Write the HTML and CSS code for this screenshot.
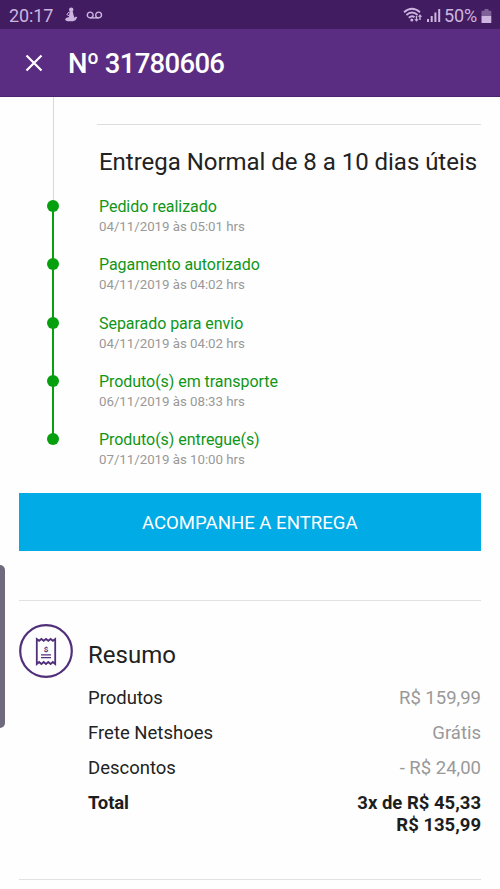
FILE: index.html
```html
<!DOCTYPE html>
<html lang="pt-BR">
<head>
<meta charset="utf-8">
<title>Nº 31780606</title>
<link rel="stylesheet" href="styles.css">
</head>
<body>
<div class="status">
  <span class="clock">20:17</span>
  <svg class="notif" width="14" height="15" viewBox="0 0 14 15"><circle cx="7.2" cy="2.8" r="2.2"/><path d="M5.500 4.500h3.200l1 4 .7 2.200 1.600-1.200 1.200.8-1.700 3L9 14.300H3.500L1 13l1-2 3-1z"/><path d="M5 5 2.800 7.500 5 8.800M4.500 12h5" class="notif-cut"/></svg>
  <svg class="voice" width="17" height="9" viewBox="0 0 17 9"><circle cx="4.200" cy="4" r="2.900"/><circle cx="12.600" cy="4" r="2.900"/><path d="M4.200 6.900h8.400"/></svg>
  <div class="system">
    <svg width="39" height="17" viewBox="0 0 39 17"><g class="wifi"><path d="M1 5.200Q9 -1.800 17 5.200M3.400 8Q9 3 14.600 8M5.800 10.700Q9 8 11.500 10.200"/></g><circle cx="8.800" cy="13" r="1.500"/><path d="m13.500 14.800-2.200-2.500h1.500V9h1.400v3.300h1.500zM17 7.300l2.200 2.500h-1.500V13h-1.400V9.800h-1.500z"/><path d="M24 12h2v3h-2zM27.700 9h2v6h-2zM31.400 5.500h2V15h-2zM35.200 2h2v13h-2z"/></svg>
    <span class="percent">50%</span>
    <svg width="11" height="16" viewBox="0 0 11 16"><path class="battery-empty" d="M3.500 1h4v1.800h2.800V8H.5V2.800h3z"/><path d="M.5 8h9.800v7H.5z"/></svg>
  </div>
</div>
<header class="appbar">
  <svg width="18" height="18" viewBox="0 0 18 18"><path d="m1.500 1.500 15 15m0-15-15 15"/></svg>
  <h1>Nº 31780606</h1>
</header>
<main>
  <section class="delivery">
    <h2>Entrega Normal de 8 a 10 dias úteis</h2>
    <ol class="steps">
      <li><strong>Pedido realizado</strong><time>04/11/2019 às 05:01 hrs</time></li>
      <li><strong>Pagamento autorizado</strong><time>04/11/2019 às 04:02 hrs</time></li>
      <li><strong>Separado para envio</strong><time>04/11/2019 às 04:02 hrs</time></li>
      <li><strong>Produto(s) em transporte</strong><time>06/11/2019 às 08:33 hrs</time></li>
      <li><strong>Produto(s) entregue(s)</strong><time>07/11/2019 às 10:00 hrs</time></li>
    </ol>
  </section>
  <button class="track">ACOMPANHE A ENTREGA</button>
  <section class="summary">
    <svg class="receipt" width="54" height="54" viewBox="0 0 54 54"><circle cx="27" cy="27" r="25.800"/><path d="M17.800 40V15l2.300 1.800 2.300-1.800 2.300 1.800L27 15l2.300 1.800 2.300-1.800 2.300 1.800L36.200 15v25l-2.300-2-2.300 2-2.300-2-2.300 2-2.300-2-2.300 2-2.300-2z"/><path class="fine" d="M22 30.800h10M22 33.600h10"/><text x="27" y="27.800">$</text></svg>
    <div class="details">
      <h2>Resumo</h2>
      <dl>
        <div><dt>Produtos</dt><dd>R$ 159,99</dd></div>
        <div><dt>Frete Netshoes</dt><dd>Grátis</dd></div>
        <div><dt>Descontos</dt><dd>- R$ 24,00</dd></div>
        <div class="total"><dt>Total</dt><dd>3x de R$ 45,33<br>R$ 135,99</dd></div>
      </dl>
    </div>
  </section>
</main>
<div class="edge-handle"></div>
</body>
</html>
```

FILE: styles.css
```css
* { box-sizing: border-box; }
body {
  margin: 0;
  height: 889px;
  overflow: hidden;
  background: #fefefe;
  color: #222;
  font-family: Roboto, sans-serif;
}
h1, h2, ol, dl, dd { margin: 0; padding: 0; font-weight: 400; }
svg { display: block; flex: none; }

.status {
  display: flex;
  align-items: center;
  height: 29px;
  padding: 2px 8px 0 9px;
  background: #411c61;
  color: #cdb5df;
  fill: #cdb5df;
  font-size: 18px;
}
.clock { width: 55px; letter-spacing: -0.1px; }
.notif { margin-top: -2px; }
.notif-cut { fill: none; stroke: #cdb5df; stroke-width: 1; }
.voice { margin-left: 8px; fill: none; stroke: #cdb5df; stroke-width: 1.4; }
.system { display: flex; align-items: center; margin-left: auto; }
.wifi { fill: none; stroke: #cdb5df; stroke-width: 1.8; }
.percent { margin: 0 4px 0 2px; letter-spacing: -0.1px; }
.battery-empty { opacity: 0.45; }

.appbar {
  display: flex;
  align-items: center;
  gap: 25px;
  height: 68px;
  padding-left: 25px;
  background: #5b2d82;
  border-bottom: 1px solid #4c2470;
  color: #fff;
}
.appbar svg { margin-top: 1px; }
.appbar path { stroke: #fff; stroke-width: 2.2; }
.appbar h1 { padding-top: 2px; font-size: 27.5px; font-weight: 500; letter-spacing: -0.7px; line-height: 32px; }

.delivery { position: relative; padding: 27px 19px 0 97px; }
.delivery::before {
  content: "";
  position: absolute;
  left: 53px;
  top: 0;
  width: 1px;
  height: 110px;
  background: #d8d8d8;
}
.delivery h2 {
  height: 72px;
  padding: 22px 0 0 2px;
  border-top: 1px solid #ddd;
  font-size: 24px;
  letter-spacing: -0.03px;
  line-height: 30px;
  white-space: nowrap;
}
.steps { list-style: none; padding-left: 2px; }
.steps li { position: relative; height: 58.3px; }
.steps li::before {
  content: "";
  position: absolute;
  left: -52px;
  top: 4px;
  width: 12px;
  height: 12px;
  border-radius: 50%;
  background: #06a00e;
}
.steps li:not(:last-child)::after {
  content: "";
  position: absolute;
  left: -47px;
  top: 10px;
  width: 2px;
  height: 58.3px;
  background: #06a00e;
}
.steps strong { display: block; color: #109618; font-size: 16px; font-weight: 400; letter-spacing: -0.05px; line-height: 22px; }
.steps time { display: block; color: #999; font-size: 13.3px; letter-spacing: -0.03px; line-height: 18px; }

.track {
  display: block;
  width: 461.5px;
  height: 58px;
  margin: 5.5px 0 0 19px;
  padding: 2px 0 0;
  border: 0;
  background: #00abe6;
  color: #fff;
  font: 18.6px Roboto, sans-serif;
}

.summary {
  display: flex;
  gap: 15px;
  height: 280px;
  margin: 49px 19px 0;
  padding-top: 23px;
  border-top: 1px solid #e1e1e1;
  border-bottom: 1px solid #e1e1e1;
}
.receipt { fill: none; stroke: #51307a; stroke-width: 2.2; }
.receipt path { stroke-width: 1.8; }
.receipt .fine { stroke-width: 1.3; }
.receipt text { fill: #51307a; stroke: none; font-size: 8px; font-weight: 700; text-anchor: middle; }
.details { flex: 1; }
.details h2 { height: 57px; padding-top: 16px; font-size: 24px; line-height: 30px; }
.details dl div { display: flex; justify-content: space-between; height: 35.1px; font-size: 18.5px; line-height: 34px; }
.details dd { color: #999; text-align: right; }
.details .total { color: #1d1d1d; font-weight: 700; }
.details .total dd { padding-top: 6px; color: #1d1d1d; font-weight: 700; line-height: 22.2px; }
.details .total dt { letter-spacing: -0.1px; }

.edge-handle {
  position: absolute;
  left: 0;
  top: 565px;
  width: 5px;
  height: 163px;
  border-radius: 0 5px 5px 0;
  background: #6f6b7c;
}
```
